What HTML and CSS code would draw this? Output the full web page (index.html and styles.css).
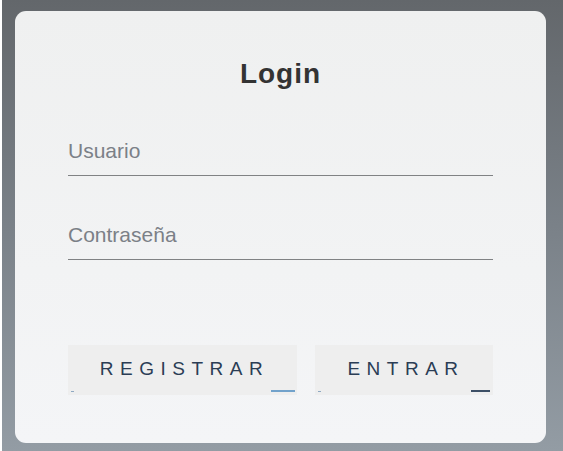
FILE: index.html
```html
<!DOCTYPE html>
<html lang="es">
<head>
<meta charset="utf-8">
<title>Login</title>
<link rel="stylesheet" href="styles.css">
</head>
<body>
<div class="card">
  <h1 class="title">Login</h1>
  <div class="field field-first"><span class="label">Usuario</span></div>
  <div class="field field-second"><span class="label">Contraseña</span></div>
  <div class="actions">
    <button class="btn btn-register">REGISTRAR</button>
    <button class="btn btn-enter">ENTRAR</button>
  </div>
</div>
</body>
</html>
```
FILE: styles.css
```css
html, body {
  margin: 0;
  height: 100%;
}
body {
  box-sizing: border-box;
  border-left: 2px solid #ffffff;
  background: linear-gradient(to bottom, #63676b 0%, #7a8188 50%, #939ca4 100%);
  padding: 11px 17px 8px 13px;
  font-family: "Liberation Sans", Arial, sans-serif;
}
.card {
  box-sizing: border-box;
  height: 432px;
  border-radius: 11px;
  background: linear-gradient(to bottom, #eff0f0 0%, #f2f3f4 60%, #f4f5f7 100%);
  padding: 47px 53px 0 53px;
  display: flex;
  flex-direction: column;
}
.title {
  margin: 0;
  font-size: 28px;
  line-height: 32px;
  font-weight: bold;
  letter-spacing: 1px;
  color: #333333;
  text-align: center;
}
.field {
  border-bottom: 1px solid #808284;
  padding-bottom: 12px;
}
.field-first {
  margin-top: 49px;
}
.field-second {
  margin-top: 47px;
}
.label {
  display: block;
  font-size: 21px;
  line-height: 24px;
  color: #7b8087;
}
.actions {
  margin-top: 85px;
  display: flex;
  gap: 18px;
}
.btn {
  position: relative;
  height: 50px;
  border: none;
  background: #eeeeee;
  font-family: "Liberation Sans", Arial, sans-serif;
  font-size: 19px;
  letter-spacing: 6.5px;
  padding: 0 0 2px 4px;
  color: #2b3d55;
}
.btn-register {
  width: 229px;
}
.btn-enter {
  width: 178px;
}
.btn::before {
  content: "";
  position: absolute;
  left: 3px;
  bottom: 3px;
  width: 3px;
  height: 1px;
  background: #8fa9c2;
}
.btn::after {
  content: "";
  position: absolute;
  bottom: 3px;
  height: 2px;
}
.btn-register::after {
  right: 2px;
  width: 24px;
  background: #72a2cb;
}
.btn-enter::after {
  right: 3px;
  width: 19px;
  background: #3c4f66;
}
```
